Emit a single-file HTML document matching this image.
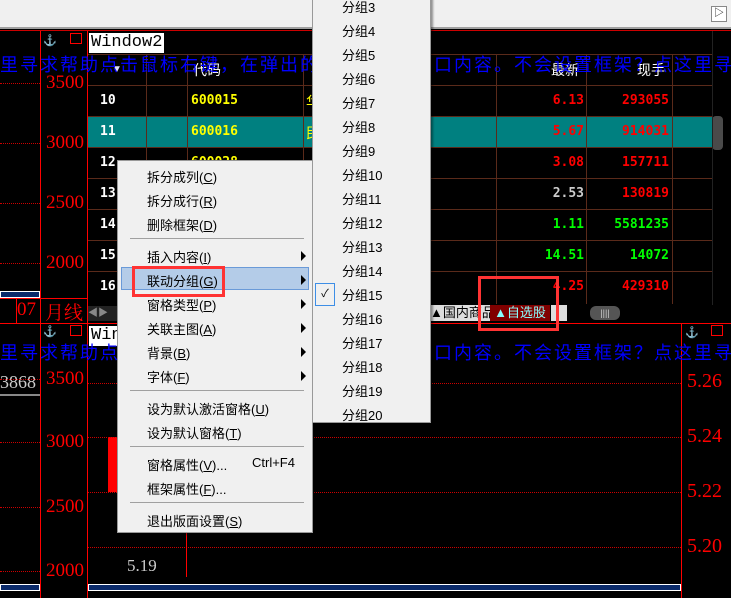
<!DOCTYPE html>
<html><head><meta charset="utf-8"><style>
*{margin:0;padding:0;box-sizing:border-box}
body{width:731px;height:598px;background:#000;position:relative;overflow:hidden;font-family:"Liberation Sans","Noto Sans CJK SC",sans-serif}
.a{position:absolute}
.ax{position:absolute;color:#f00;font:19px "Liberation Serif","Noto Serif CJK SC",serif}
.dl{position:absolute;height:0;border-top:1px dotted #c00}
.vl{position:absolute;width:1px;background:#f00}
.hl{position:absolute;height:1px;background:#5a2a1a}
.cl{position:absolute;width:1px;background:#5a2a1a}
.c{position:absolute;font:bold 13px "DejaVu Sans Mono","Liberation Mono",monospace;text-align:right}
.blue{position:absolute;color:#0000ff;font:18px "Noto Sans CJK SC",sans-serif;white-space:nowrap;letter-spacing:2px}
.mi{position:absolute;left:29px;font:13px "Liberation Sans","Noto Sans CJK SC",sans-serif;color:#000}
.ar{position:absolute;right:6px;width:0;height:0;border-left:5px solid #000;border-top:5px solid transparent;border-bottom:5px solid transparent}
.sep{position:absolute;left:12px;right:8px;height:1px;background:#a0a0a0}
.si{position:absolute;left:29px;font:13px "Liberation Sans","Noto Sans CJK SC",sans-serif;color:#000}
</style></head><body>
<div class="a" style="left:0;top:0;width:731px;height:27px;background:#f0f0f0"></div>
<div class="a" style="left:0;top:27px;width:731px;height:2px;background:#a0a0a0"></div>
<div class="a" style="left:711px;top:6px;width:16px;height:16px;border:1px solid #888;background:#fff;font-size:10px;text-align:center;line-height:14px">▷</div>
<div class="a" style="left:0;top:30px;width:731px;height:1px;background:#c00"></div>

<div class="vl" style="left:40px;top:31px;height:567px"></div>
<div class="vl" style="left:87px;top:31px;height:567px"></div>
<div class="a" style="left:43px;top:34px;color:#f00;font-size:11px">⚓</div>
<div class="a" style="left:70px;top:33px;width:12px;height:11px;border:1px solid #f00"></div>
<div class="dl" style="left:0;top:83px;width:40px"></div><div class="ax" style="left:46px;top:72px">3500</div>
<div class="dl" style="left:0;top:143px;width:40px"></div><div class="ax" style="left:46px;top:132px">3000</div>
<div class="dl" style="left:0;top:203px;width:40px"></div><div class="ax" style="left:46px;top:192px">2500</div>
<div class="dl" style="left:0;top:263px;width:40px"></div><div class="ax" style="left:46px;top:252px">2000</div>
<div class="a" style="left:0;top:291px;width:40px;height:7px;background:#0a2a6a;border:1px solid #fff"></div>
<div class="a" style="left:0;top:298px;width:88px;height:1px;background:#f00"></div>
<div class="vl" style="left:16px;top:298px;height:25px"></div>
<div class="ax" style="left:17px;top:299px;font-size:19px">07</div>
<div class="ax" style="left:45px;top:298px;font-size:19px">月线</div>

<div class="a" style="left:88px;top:31px;width:624px;height:274px;background:#000"></div>
<div class="a" style="left:89px;top:33px;background:#fff;color:#000;font:17px 'Liberation Mono',monospace;padding:0 2px;height:20px;line-height:20px">Window2</div>
<div class="hl" style="left:88px;top:54px;width:624px"></div>
<div class="hl" style="left:88px;top:85px;width:624px"></div>
<div class="a" style="left:88px;top:117px;width:624px;height:30px;background:#008080"></div>
<div class="hl" style="left:88px;top:116px;width:624px"></div>
<div class="hl" style="left:88px;top:147px;width:624px"></div>
<div class="hl" style="left:88px;top:178px;width:624px"></div>
<div class="hl" style="left:88px;top:209px;width:624px"></div>
<div class="hl" style="left:88px;top:240px;width:624px"></div>
<div class="hl" style="left:88px;top:271px;width:624px"></div>
<div class="cl" style="left:146px;top:54px;height:250px"></div>
<div class="cl" style="left:187px;top:54px;height:250px"></div>
<div class="cl" style="left:303px;top:54px;height:250px"></div>
<div class="cl" style="left:496px;top:54px;height:250px"></div>
<div class="cl" style="left:586px;top:54px;height:250px"></div>
<div class="cl" style="left:672px;top:54px;height:250px"></div>
<div class="a" style="left:193px;top:60px;color:#fff;font-size:14px">代码</div>
<div class="a" style="left:551px;top:60px;color:#fff;font-size:14px">最新</div>
<div class="a" style="left:637px;top:60px;color:#fff;font-size:14px">现手</div>
<div class="a" style="left:112px;top:64px;color:#ddf;font-size:10px">▼</div>
<div class="c" style="left:100px;top:93px;color:#fff;width:30px;text-align:left">10</div>
<div class="c" style="left:100px;top:124px;color:#fff;width:30px;text-align:left">11</div>
<div class="c" style="left:100px;top:155px;color:#fff;width:30px;text-align:left">12</div>
<div class="c" style="left:100px;top:186px;color:#fff;width:30px;text-align:left">13</div>
<div class="c" style="left:100px;top:217px;color:#fff;width:30px;text-align:left">14</div>
<div class="c" style="left:100px;top:248px;color:#fff;width:30px;text-align:left">15</div>
<div class="c" style="left:100px;top:279px;color:#fff;width:30px;text-align:left">16</div>
<div class="c" style="left:191px;top:93px;color:#ff0;text-align:left">600015</div>
<div class="c" style="left:191px;top:124px;color:#ff0;text-align:left">600016</div>
<div class="c" style="left:191px;top:155px;color:#ff0;text-align:left">600028</div>
<div class="a" style="left:306px;top:92px;color:#ff0;font-size:14px">华</div>
<div class="a" style="left:306px;top:123px;color:#ff0;font-size:14px">民</div>
<div class="c" style="left:500px;width:84px;top:93px;color:#f00">6.13</div>
<div class="c" style="left:500px;width:84px;top:124px;color:#f00">5.67</div>
<div class="c" style="left:500px;width:84px;top:155px;color:#f00">3.08</div>
<div class="c" style="left:500px;width:84px;top:186px;color:#ccc">2.53</div>
<div class="c" style="left:500px;width:84px;top:217px;color:#0f0">1.11</div>
<div class="c" style="left:500px;width:84px;top:248px;color:#0f0">14.51</div>
<div class="c" style="left:500px;width:84px;top:279px;color:#f00">4.25</div>
<div class="c" style="left:590px;width:79px;top:93px;color:#f00">293055</div>
<div class="c" style="left:590px;width:79px;top:124px;color:#f00">914031</div>
<div class="c" style="left:590px;width:79px;top:155px;color:#f00">157711</div>
<div class="c" style="left:590px;width:79px;top:186px;color:#f00">130819</div>
<div class="c" style="left:590px;width:79px;top:217px;color:#0f0">5581235</div>
<div class="c" style="left:590px;width:79px;top:248px;color:#0f0">14072</div>
<div class="c" style="left:590px;width:79px;top:279px;color:#f00">429310</div>
<div class="a" style="left:712px;top:116px;width:11px;height:34px;background:#4a4a4a;border-radius:4px"></div>
<div class="a" style="left:712px;top:31px;width:19px;height:274px;border-left:1px solid #222"></div>
<div class="a" style="left:88px;top:305px;width:643px;height:17px;background:#000"></div>
<div class="a" style="left:88px;top:306px;width:34px;height:15px;background:#222;color:#888;font-size:10px;line-height:15px">◀▶</div>
<div class="a" style="left:430px;top:305px;width:60px;height:16px;background:#ddd;color:#000;font-size:13px;line-height:16px;white-space:nowrap;overflow:hidden">▲国内商品</div>
<div class="a" style="left:490px;top:305px;width:60px;height:16px;background:#800000;color:#8ff;font-size:13px;line-height:16px;text-align:center">▲自选股</div>
<div class="a" style="left:551px;top:305px;width:16px;height:16px;background:#ddd"></div>
<div class="a" style="left:590px;top:306px;width:30px;height:14px;background:#555;border-radius:6px;color:#ccc;font-size:9px;text-align:center;line-height:14px">||||</div>
<div class="a" style="left:0;top:323px;width:731px;height:1px;background:#f00"></div>

<div class="a" style="left:43px;top:325px;color:#f00;font-size:11px">⚓</div>
<div class="a" style="left:70px;top:325px;width:12px;height:11px;border:1px solid #f00"></div>
<div class="a" style="left:0;top:372px;width:40px;height:22px;color:#ccc;font:18px 'Liberation Serif',serif">3868</div>
<div class="a" style="left:0;top:394px;width:40px;height:2px;background:#888"></div>
<div class="dl" style="left:0;top:379px;width:40px"></div><div class="ax" style="left:46px;top:368px">3500</div>
<div class="dl" style="left:0;top:442px;width:40px"></div><div class="ax" style="left:46px;top:431px">3000</div>
<div class="dl" style="left:0;top:507px;width:40px"></div><div class="ax" style="left:46px;top:496px">2500</div>
<div class="dl" style="left:0;top:571px;width:40px"></div><div class="ax" style="left:46px;top:560px">2000</div>
<div class="a" style="left:0;top:584px;width:40px;height:7px;background:#0a2a6a;border:1px solid #fff"></div>

<div class="a" style="left:89px;top:326px;background:#fff;color:#000;font:17px 'Liberation Mono',monospace;padding:0 2px;height:20px;line-height:20px">Window2</div>
<div class="a" style="left:108px;top:437px;width:9px;height:55px;background:#f00"></div>
<div class="dl" style="left:88px;top:383px;width:593px"></div>
<div class="dl" style="left:88px;top:437px;width:593px"></div>
<div class="dl" style="left:88px;top:492px;width:593px"></div>
<div class="dl" style="left:88px;top:547px;width:593px"></div>
<div class="vl" style="left:186px;top:532px;height:45px"></div>
<div class="vl" style="left:681px;top:324px;height:274px"></div>
<div class="a" style="left:685px;top:326px;color:#f00;font-size:11px">⚓</div>
<div class="a" style="left:711px;top:325px;width:12px;height:11px;border:1px solid #f00"></div>
<div class="ax" style="left:687px;top:370px;font-size:20px">5.26</div>
<div class="ax" style="left:687px;top:425px;font-size:20px">5.24</div>
<div class="ax" style="left:687px;top:480px;font-size:20px">5.22</div>
<div class="ax" style="left:687px;top:535px;font-size:20px">5.20</div>
<div class="a" style="left:127px;top:556px;color:#ccc;font:17px 'Liberation Serif',serif">5.19</div>
<div class="a" style="left:88px;top:584px;width:593px;height:7px;background:#0a2a6a;border:1px solid #fff"></div>

<div class="blue" style="left:0px;top:51px">里寻求帮助点击鼠标右键，在弹出的</div>
<div class="blue" style="left:434px;top:51px">口内容。不会设置框架？点这里寻求</div>
<div class="blue" style="left:0px;top:339px">里寻求帮助点击鼠标右键，在弹出的</div>
<div class="blue" style="left:434px;top:339px">口内容。不会设置框架？点这里寻求</div>

<div class="a" style="left:117px;top:160px;width:196px;height:373px;background:#f0f0f0;border:1px solid #999;box-shadow:2px 2px 2px rgba(0,0,0,.4)">
<div class="mi" style="top:6px">拆分成列(<u>C</u>)</div>
<div class="mi" style="top:30px">拆分成行(<u>R</u>)</div>
<div class="mi" style="top:54px">删除框架(<u>D</u>)</div>
<div class="sep" style="top:77px"></div>
<div class="mi" style="top:86px">插入内容(<u>I</u>)</div><div class="ar" style="top:90px"></div>
<div class="a" style="left:3px;top:106px;width:188px;height:23px;background:#b4cce8;border:1px solid #6a9ad8"></div>
<div class="mi" style="top:110px">联动分组(<u>G</u>)</div><div class="ar" style="top:114px"></div>
<div class="mi" style="top:134px">窗格类型(<u>P</u>)</div><div class="ar" style="top:138px"></div>
<div class="mi" style="top:158px">关联主图(<u>A</u>)</div><div class="ar" style="top:162px"></div>
<div class="mi" style="top:182px">背景(<u>B</u>)</div><div class="ar" style="top:186px"></div>
<div class="mi" style="top:206px">字体(<u>F</u>)</div><div class="ar" style="top:210px"></div>
<div class="sep" style="top:229px"></div>
<div class="mi" style="top:238px">设为默认激活窗格(<u>U</u>)</div>
<div class="mi" style="top:262px">设为默认窗格(<u>T</u>)</div>
<div class="sep" style="top:285px"></div>
<div class="mi" style="top:294px">窗格属性(<u>V</u>)...</div>
<div class="a" style="left:134px;top:294px;font-size:13px">Ctrl+F4</div>
<div class="mi" style="top:318px">框架属性(<u>F</u>)...</div>
<div class="sep" style="top:341px"></div>
<div class="mi" style="top:350px">退出版面设置(<u>S</u>)</div>
</div>
<div class="a" style="left:132px;top:266px;width:93px;height:31px;border:3px solid #f33"></div>

<div class="a" style="left:312px;top:-8px;width:119px;height:431px;background:#f0f0f0;border:1px solid #999;box-shadow:2px 2px 2px rgba(0,0,0,.4)">
<div class="si" style="top:4px">分组3</div>
<div class="si" style="top:28px">分组4</div>
<div class="si" style="top:52px">分组5</div>
<div class="si" style="top:76px">分组6</div>
<div class="si" style="top:100px">分组7</div>
<div class="si" style="top:124px">分组8</div>
<div class="si" style="top:148px">分组9</div>
<div class="si" style="top:172px">分组10</div>
<div class="si" style="top:196px">分组11</div>
<div class="si" style="top:220px">分组12</div>
<div class="si" style="top:244px">分组13</div>
<div class="si" style="top:268px">分组14</div>
<div class="a" style="left:2px;top:290px;width:20px;height:23px;border:1px solid #3d8ee6;font-size:11px;text-align:center;line-height:21px">✓</div>
<div class="si" style="top:292px">分组15</div>
<div class="si" style="top:316px">分组16</div>
<div class="si" style="top:340px">分组17</div>
<div class="si" style="top:364px">分组18</div>
<div class="si" style="top:388px">分组19</div>
<div class="si" style="top:412px">分组20</div>
</div>

<div class="a" style="left:478px;top:276px;width:81px;height:55px;border:3px solid #f33"></div>
</body></html>
